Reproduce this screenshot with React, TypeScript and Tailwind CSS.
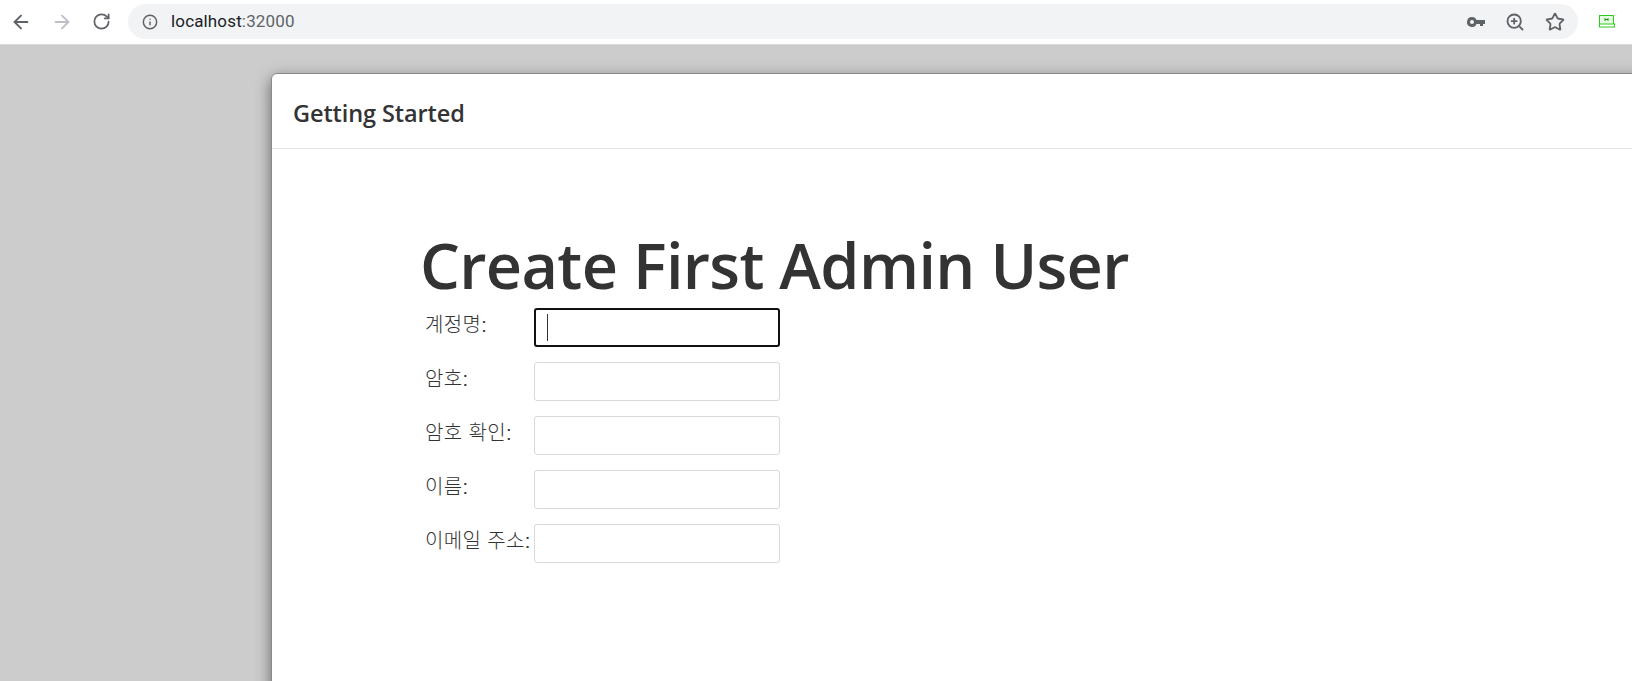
import { ArrowLeft, ArrowRight, RotateCw, Info, ZoomIn, Star } from "lucide-react";

const FIELDS = [
  { label: "계정명:", focused: true },
  { label: "암호:" },
  { label: "암호 확인:" },
  { label: "이름:" },
  { label: "이메일 주소:" },
];

function KeyIcon() {
  return (
    <svg width="18" height="10" viewBox="0 0 18 10" fill="#5f6368">
      <path fillRule="evenodd" d="M5 0a5 5 0 0 1 4.6 3H18v4h-2v2h-3V7H9.6A5 5 0 1 1 5 0Zm0 3a2 2 0 1 0 0 4 2 2 0 0 0 0-4Z" />
    </svg>
  );
}

function ExtensionIcon() {
  return (
    <svg width="16" height="13" viewBox="0 0 16 13" fill="none">
      <rect x="0.5" y="0.5" width="14" height="11" fill="#e8fbe4" stroke="#2ecc1f" />
      <rect x="0.5" y="9" width="15" height="3" fill="#fff" stroke="#2ecc1f" />
      <path d="M6 3v3M9 3v3M6 4.5h3" stroke="#1a9c10" strokeWidth="1" />
    </svg>
  );
}

function BrowserBar() {
  return (
    <header className="flex h-[45px] shrink-0 items-center border-b border-[#d9dadb] bg-white pb-[1px]">
      <div className="flex items-center gap-[19px] pl-[10px] pr-[17px]">
        <ArrowLeft size={22} strokeWidth={2.1} color="#5f6368" />
        <ArrowRight size={22} strokeWidth={2.1} color="#bdc1c6" />
        <RotateCw size={19} strokeWidth={2.2} color="#5f6368" />
      </div>
      <div className="flex h-[35px] w-[1450px] items-center justify-between rounded-full bg-[#f1f3f4] pl-[14px] pr-[13px]">
        <div className="flex items-center gap-[13px]">
          <Info size={16} strokeWidth={2.2} color="#5f6368" />
          <span className="text-[17px] tracking-[0.15px] font-['Roboto',sans-serif] text-[#5f6368]">
            <span className="text-[#202124]">localhost</span>:32000
          </span>
        </div>
        <div className="flex items-center gap-[20px]">
          <KeyIcon />
          <ZoomIn size={20} strokeWidth={2.2} color="#5f6368" />
          <Star size={20} strokeWidth={2.2} color="#5f6368" />
        </div>
      </div>
      <div className="ml-[21px]">
        <ExtensionIcon />
      </div>
    </header>
  );
}

export default function App() {
  return (
    <div className="flex h-[681px] w-[1632px] flex-col overflow-hidden bg-[#cccccc] font-['Open_Sans','Noto_Sans_CJK_KR',sans-serif] text-[#333333]">
      <BrowserBar />
      <main className="flex-1 pl-[271px] pt-[28px]">
        <section className="h-[700px] w-[1400px] rounded-[6px] border border-[#8a8a8a] bg-white shadow-[0_5px_15px_rgba(0,0,0,0.5)]">
          <div className="flex h-[75px] items-center border-b border-[#e5e5e5] pl-[21px] pt-[5px]">
            <h4 className="text-[23.5px] font-semibold tracking-[-0.1px]">Getting Started</h4>
          </div>
          <div className="pl-[148px] pt-[72px]">
            <h1 className="text-[63px] leading-[87px] font-semibold tracking-[-0.65px]">
              Create First Admin User
            </h1>
            <form className="ml-[1px] flex flex-col gap-[15px] pl-[4px]">
              {FIELDS.map((field) => (
                <div key={field.label} className="flex items-start">
                  <label className="w-[109px] whitespace-nowrap pt-[5px] text-[20px] leading-[24px] font-light tracking-[0.35px] font-['Liberation_Sans','Noto_Sans_CJK_KR',sans-serif] text-[#333333]">
                    {field.label}
                  </label>
                  {field.focused ? (
                    <div className="flex h-[39px] w-[246px] items-center rounded-[3px] border-2 border-[#111111] bg-white pl-[11px]">
                      <div className="h-[27px] w-[1px] bg-[#333333]" />
                    </div>
                  ) : (
                    <input className="h-[39px] w-[246px] rounded-[3px] border border-[#d9d9d9] bg-white" />
                  )}
                </div>
              ))}
            </form>
          </div>
        </section>
      </main>
    </div>
  );
}
